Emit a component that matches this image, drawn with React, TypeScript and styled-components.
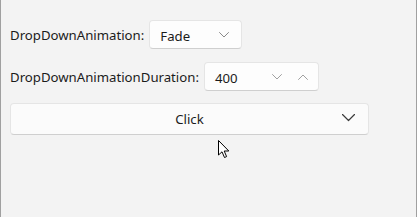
import styled, { createGlobalStyle } from "styled-components";

const GlobalStyle = createGlobalStyle`
  html, body {
    margin: 0;
    padding: 0;
    background: #f3f3f3;
  }
  body {
    font-family: "Segoe UI", "Noto Sans", "Open Sans", sans-serif;
    font-size: 13.2px;
    color: #1b1b1b;
  }
`;

const Window = styled.div`
  width: 417px;
  height: 217px;
  box-sizing: border-box;
  border-left: 1px solid #a0a0a0;
  border-right: 1px solid #a0a0a0;
  background: #f3f3f3;
  padding: 20px 0 0 9px;
  display: flex;
  flex-direction: column;
  gap: 13px;
  position: relative;
`;

const Row = styled.div`
  display: flex;
  align-items: center;
  gap: 5px;
`;

const Label = styled.span`
  line-height: 20px;
  white-space: nowrap;
`;

const Field = styled.div<{ $width: number; $padRight: number }>`
  width: ${(p) => p.$width}px;
  height: 29px;
  box-sizing: border-box;
  background: #fdfdfd;
  border: 1px solid #e5e5e5;
  border-bottom-color: #cfcfcf;
  border-radius: 4px;
  display: flex;
  align-items: center;
  padding: 0 ${(p) => p.$padRight}px 0 10px;
`;

const Value = styled.span`
  flex: 1;
  line-height: 20px;
  padding-top: 2px;
`;

const Spin = styled.div`
  display: flex;
  gap: 16px;
  align-items: center;
`;

const DropButton = styled.div`
  width: 359px;
  height: 32px;
  margin-top: -1px;
  box-sizing: border-box;
  background: #fbfbfb;
  border: 1px solid #e5e5e5;
  border-bottom-color: #cfcfcf;
  border-radius: 4px;
  display: flex;
  align-items: center;
  justify-content: center;
  position: relative;
`;

const ButtonText = styled.span`
  line-height: 20px;
`;

const ButtonChevron = styled.span`
  position: absolute;
  right: 13px;
  top: 10px;
  display: flex;
`;

const Cursor = styled.svg`
  position: absolute;
  left: 217px;
  top: 140px;
`;

const Chevron = ({
  size,
  up,
  color,
  stroke,
}: {
  size: number;
  up?: boolean;
  color: string;
  stroke: number;
}) => (
  <svg width={size} height={size / 2 + 1} viewBox={`0 0 ${size} ${size / 2 + 1}`}>
    <polyline
      points={
        up
          ? `0.5,${size / 2 + 0.5} ${size / 2},1 ${size - 0.5},${size / 2 + 0.5}`
          : `0.5,0.5 ${size / 2},${size / 2} ${size - 0.5},0.5`
      }
      fill="none"
      stroke={color}
      strokeWidth={stroke}
      strokeLinejoin="round"
      strokeLinecap="round"
    />
  </svg>
);

export default function App() {
  return (
    <>
      <GlobalStyle />
      <Window>
        <Row>
          <Label>DropDownAnimation:</Label>
          <Field $width={93} $padRight={12}>
            <Value>Fade</Value>
            <Chevron size={10} color="#8a8a8a" stroke={1} />
          </Field>
        </Row>
        <Row>
          <Label>DropDownAnimationDuration:</Label>
          <Field $width={115} $padRight={10}>
            <Value>400</Value>
            <Spin>
              <Chevron size={10} color="#a0a0a0" stroke={1} />
              <Chevron size={10} up color="#a0a0a0" stroke={1} />
            </Spin>
          </Field>
        </Row>
        <DropButton>
          <ButtonText>Click</ButtonText>
          <ButtonChevron>
            <Chevron size={13} color="#3a3a3a" stroke={1.2} />
          </ButtonChevron>
        </DropButton>
        <Cursor width="12" height="20" viewBox="0 0 12 20">
          <path
            d="M0.5,0.5 L0.5,15 L4,11.8 L6.5,17.5 L8.6,16.6 L6.2,11 L10.8,11 Z"
            fill="#fff"
            stroke="#000"
            strokeWidth="1"
            strokeLinejoin="miter"
          />
        </Cursor>
      </Window>
    </>
  );
}
